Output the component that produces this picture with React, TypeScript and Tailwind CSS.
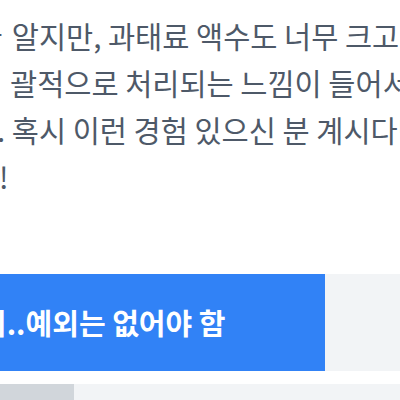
const options = [
  { label: "지..예외는 없어야 함", pct: 81.25, active: true },
  { label: "상황에 따라 봐줘야 함", pct: 18.5, active: false },
];

export default function App() {
  return (
    <div
      className="h-[400px] w-[400px] overflow-hidden bg-white"
      style={{ fontFamily: '"Noto Sans CJK KR", "Noto Sans", sans-serif' }}
    >
      {/* 본문 (좌우가 잘린 영역) */}
      <div className="pt-[12px] text-[29.5px] leading-[47px] whitespace-nowrap text-[#4e5968]">
        <div className="-ml-[25px]">
          다<span className="ml-[3px]"> 알지만, 과태료 액수도 너무 크고 일</span>
        </div>
        <div className="ml-[10px]">괄적으로 처리되는 느낌이 들어서</div>
        <div className="-ml-[3px]">. 혹시 이런 경험 있으신 분 계시다면</div>
        <div className="-ml-[1px]">!</div>
      </div>

      {/* 투표 항목 */}
      <div className="mt-[74px] flex flex-col gap-[13px]">
        {options.map((o) => (
          <div key={o.label} className="relative h-[97px] w-[400px] bg-[#f2f4f6]">
            <div
              className={o.active ? "h-full bg-[#3182f6]" : "h-full bg-[#d1d6db]"}
              style={{ width: `${o.pct}%` }}
            />
            <div
              className={
                o.active
                  ? "absolute inset-y-0 -left-[20px] flex items-center whitespace-nowrap text-[29px] font-bold text-white"
                  : "absolute inset-y-0 -left-[20px] flex items-center whitespace-nowrap text-[29px] font-bold text-[#4e5968]"
              }
            >
              {o.label}
            </div>
          </div>
        ))}
      </div>
    </div>
  );
}
